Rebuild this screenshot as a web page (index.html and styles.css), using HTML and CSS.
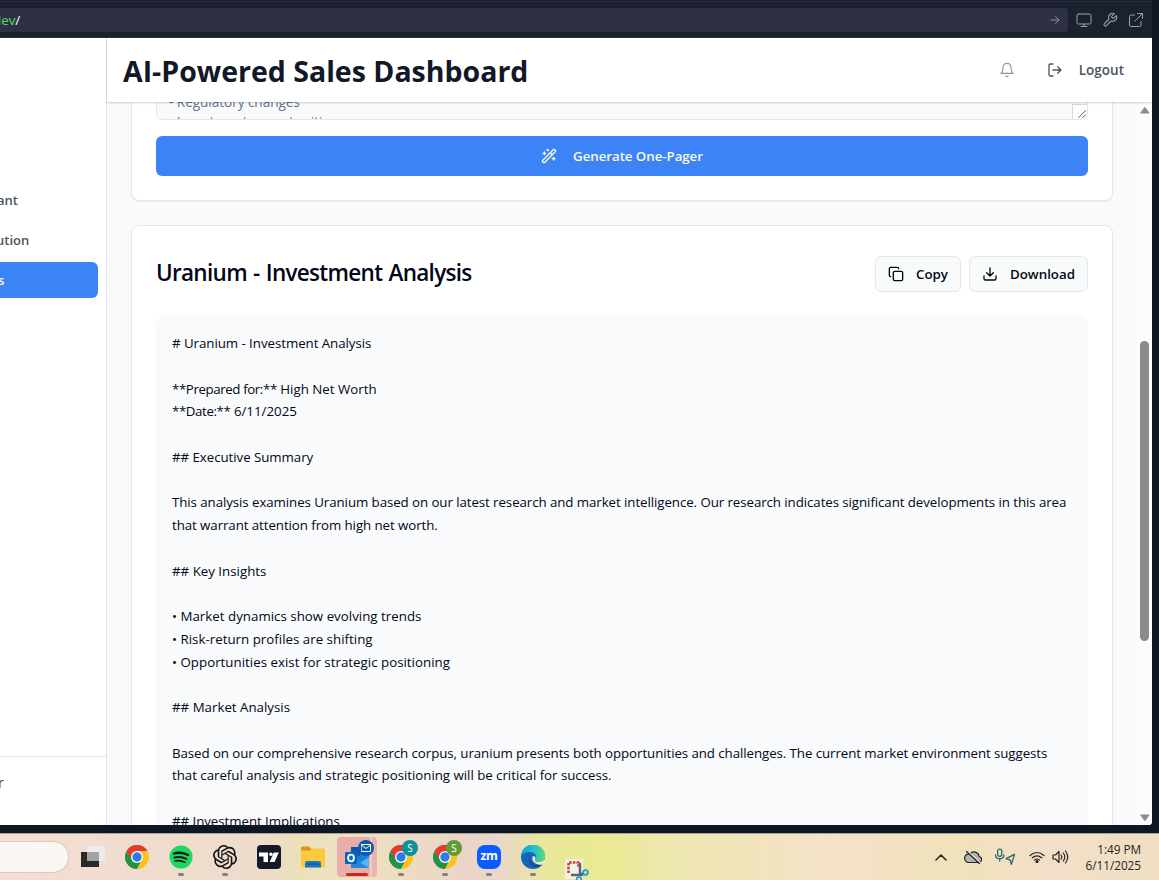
FILE: index.html
```html
<!DOCTYPE html>
<html lang="en">
<head>
<meta charset="utf-8">
<title>AI-Powered Sales Dashboard</title>
<link rel="stylesheet" href="styles.css">
</head>
<body>
<svg class="defs" width="0" height="0" aria-hidden="true">
  <defs>
    <symbol id="chrome" viewBox="0 0 24 24">
      <path d="M1.6 6A12 12 0 0 1 22.4 6L12 12z" fill="#e33b2e"/>
      <path d="M22.4 6A12 12 0 0 1 12 24L16.4 14.6 12 6z" fill="#fcc31e"/>
      <path d="M1.6 6A12 12 0 0 0 12 24L16.6 14.8 7.5 14.5z" fill="#229342"/>
      <path d="M12 6h10.4A12 12 0 0 0 1.6 6l5 8.600z" fill="#e33b2e"/>
      <circle cx="12" cy="12" r="6" fill="#fff"/>
      <circle cx="12" cy="12" r="4.700" fill="#2f7bea"/>
    </symbol>
  </defs>
</svg>

<header class="browser">
  <div class="address"><span><b>dev</b>/</span>
    <svg class="go" viewBox="0 0 10 10"><path d="M1 5h8M5.500 1.500 9 5 5.500 8.500"/></svg>
  </div>
  <nav class="tools">
    <svg viewBox="0 0 16 16"><rect x="1" y="2" width="14" height="10" rx="1.500"/><path d="M8 12v2.500M5 14.500h6"/></svg>
    <svg viewBox="0 0 24 24"><path d="M14.700 6.300a1 1 0 0 0 0 1.400l1.600 1.600a1 1 0 0 0 1.400 0l3.770-3.770a6 6 0 0 1-7.940 7.940l-6.910 6.910a2.120 2.120 0 0 1-3-3l6.910-6.910a6 6 0 0 1 7.940-7.940z" stroke-width="1.700"/></svg>
    <svg viewBox="0 0 16 16"><path d="M6.500 3H3a1.500 1.500 0 0 0-1.500 1.500V13A1.500 1.500 0 0 0 3 14.500h8.500A1.500 1.500 0 0 0 13 13V9.500M9.500 1.500h5v5M14.500 1.500 7 9"/></svg>
  </nav>
</header>

<div class="window">
  <aside class="sidebar">
    <nav class="menu">
      <a>ant</a>
      <a>ution</a>
      <a class="active">s</a>
    </nav>
    <div class="user">r</div>
  </aside>
  <section class="app">
    <header class="topbar">
      <h1>AI-Powered Sales Dashboard</h1>
      <svg class="bell" viewBox="0 0 24 24"><path d="M6 8a6 6 0 0 1 12 0c0 7 3 9 3 9H3s3-2 3-9M10.300 21a1.940 1.940 0 0 0 3.400 0"/></svg>
      <svg class="exit" viewBox="0 0 24 24"><path d="M9 21H5a2 2 0 0 1-2-2V5a2 2 0 0 1 2-2h4M16 17l5-5-5-5M21 12H9"/></svg>
      <span class="logout">Logout</span>
    </header>
    <div class="body">
      <main>
        <article class="card form">
          <div class="prompt">
            <p>- Regulatory changes<br>- Investment opportunities</p>
            <svg class="grip" viewBox="0 0 15 15"><path d="M6 13.500 13.500 6M10.500 13.500 13.500 10.500"/></svg>
          </div>
          <button class="generate">
            <svg viewBox="0 0 24 24"><path d="m21.640 3.640-1.280-1.280a1.210 1.210 0 0 0-1.720 0L2.360 18.640a1.210 1.210 0 0 0 0 1.720l1.280 1.280a1.200 1.200 0 0 0 1.720 0L21.640 5.360a1.200 1.200 0 0 0 0-1.720M14 7l3 3M5 6v4M19 14v4M10 2v2M7 8H3M21 16h-4M11 3H9"/></svg>
            <span>Generate One-Pager</span>
          </button>
        </article>
        <article class="card result">
          <div class="heading">
            <h2>Uranium - Investment Analysis</h2>
            <button class="copy"><svg viewBox="0 0 24 24"><rect x="8" y="8" width="14" height="14" rx="2"/><path d="M4 16c-1.100 0-2-.9-2-2V4c0-1.100.9-2 2-2h10c1.100 0 2 .9 2 2"/></svg><span>Copy</span></button>
            <button class="download"><svg viewBox="0 0 24 24"><path d="M21 15v4a2 2 0 0 1-2 2H5a2 2 0 0 1-2-2v-4M7 10l5 5 5-5M12 15V3"/></svg><span>Download</span></button>
          </div>
          <div class="report">
            <p class="sub"># Uranium - Investment Analysis</p>
            <p class="meta"><span>**Prepared for:**</span> High Net Worth<br><span>**Date:**</span> 6/11/2025</p>
            <p class="sub">## Executive Summary</p>
            <p class="long">This analysis examines Uranium based on our latest research and market intelligence. Our research indicates significant developments in this area<br>that warrant attention from high net worth.</p>
            <p>## Key Insights</p>
            <p class="list">• Market dynamics show evolving trends<br>• Risk-return profiles are shifting<br>• Opportunities exist for strategic positioning</p>
            <p>## Market Analysis</p>
            <p class="long">Based on our comprehensive research corpus, uranium presents both opportunities and challenges. The current market environment suggests<br><span class="last">that careful analysis and strategic positioning will be critical for success.</span></p>
            <p class="sub">## Investment Implications</p>
          </div>
        </article>
      </main>
      <div class="scrollbar">
        <svg viewBox="0 0 10 7"><path d="M5 .5 9 6H1z"/></svg>
        <i></i>
        <svg viewBox="0 0 10 7"><path d="M5 6.500 9 1H1z"/></svg>
      </div>
    </div>
  </section>
</div>

<footer class="taskbar">
  <div class="search"></div>
  <div class="apps">
    <div class="app-icon"><svg viewBox="0 0 24 24"><path d="M0 7h18v15H0z" fill="#292929"/><path d="M6 1h18v15H6z" fill="#ececec"/><path d="M6 7h12v9H6z" fill="#a2a2a1"/></svg></div>
    <div class="app-icon"><svg><use href="#chrome"/></svg></div>
    <div class="app-icon running"><svg viewBox="0 0 24 24"><circle cx="12" cy="12" r="11.500" fill="#1ed760"/><g fill="none" stroke="#101c14" stroke-linecap="round"><path d="M5 8.500q7-2 14 1.500" stroke-width="2.300"/><path d="M5.500 12.500q6-1.600 12 1.300" stroke-width="1.900"/><path d="M6 16q5-1.200 10 1.200" stroke-width="1.600"/></g></svg></div>
    <div class="app-icon running"><svg viewBox="0 0 24 24"><path fill="#111" d="M22.282 9.821a5.985 5.985 0 0 0-.516-4.910 6.046 6.046 0 0 0-6.510-2.900A6.065 6.065 0 0 0 4.981 4.182a5.985 5.985 0 0 0-3.998 2.900 6.046 6.046 0 0 0 .743 7.097 5.980 5.980 0 0 0 .511 4.911 6.051 6.051 0 0 0 6.515 2.900A5.985 5.985 0 0 0 13.260 24a6.056 6.056 0 0 0 5.772-4.206 5.990 5.990 0 0 0 3.998-2.900 6.056 6.056 0 0 0-.748-7.073zM13.260 22.430a4.476 4.476 0 0 1-2.876-1.041l.141-.081 4.779-2.758a.795.795 0 0 0 .393-.681v-6.737l2.020 1.169a.071.071 0 0 1 .038.052v5.583a4.504 4.504 0 0 1-4.495 4.494zM3.600 18.304a4.471 4.471 0 0 1-.535-3.014l.142.085 4.783 2.759a.771.771 0 0 0 .780 0l5.843-3.369v2.332a.080.080 0 0 1-.033.062L9.740 19.950a4.499 4.499 0 0 1-6.140-1.646zM2.340 7.896a4.485 4.485 0 0 1 2.366-1.973V11.600a.766.766 0 0 0 .388.677l5.815 3.354-2.020 1.169a.076.076 0 0 1-.071 0l-4.830-2.787A4.504 4.504 0 0 1 2.340 7.872zm16.597 3.855-5.833-3.387L15.119 7.200a.076.076 0 0 1 .071 0l4.830 2.791a4.494 4.494 0 0 1-.676 8.105v-5.678a.790.790 0 0 0-.407-.667zm2.010-3.023-.141-.085-4.774-2.782a.776.776 0 0 0-.785 0L9.409 9.230V6.897a.066.066 0 0 1 .028-.061l4.830-2.787a4.499 4.499 0 0 1 6.680 4.660zM8.306 12.863l-2.020-1.164a.080.080 0 0 1-.038-.057V6.075a4.499 4.499 0 0 1 7.376-3.454l-.142.081L8.704 5.460a.795.795 0 0 0-.393.681zm1.097-2.365 2.602-1.500 2.607 1.500v2.999l-2.597 1.500-2.607-1.500z"/></svg></div>
    <div class="app-icon"><svg viewBox="0 0 24 24"><rect width="24" height="24" rx="4" fill="#151b26"/><path d="M2 7.500h9V17H6.500v-5.500H2zM16.800 7.500h5L17.500 17h-4.800z" fill="#fff"/><circle cx="13.900" cy="9.200" r="1.800" fill="#fff"/></svg></div>
    <div class="app-icon"><svg viewBox="0 0 24 24"><path d="M0 3q0-1.500 1.500-1.500H8L10.500 4H23v7H0z" fill="#d99a13"/><path d="M0 5.500h9L11 3.500h11.500Q24 3.500 24 5v16.500q0 1-1 1H1q-1 0-1-1z" fill="#fdc93c"/><path d="M4 22.500V18q0-2 2-2h12q2 0 2 2v4.500z" fill="#1879c8"/><path d="M7 19h10" stroke="#0c559c" stroke-width="1.500"/></svg></div>
    <div class="app-icon outlook"><svg viewBox="0 0 24 24"><path d="M6 2h18v21H6z" fill="#1681d6"/><path d="M6 2h9v9H6z" fill="#0a58ad"/><path d="M6 13l9 5 9-6v11H6z" fill="#53b6f0"/><path d="M6 12l18 11H6z" fill="#2287d9"/><rect y="7" width="12" height="12" rx="1" fill="#0865bd"/><ellipse cx="6" cy="13" rx="2.900" ry="3.300" fill="none" stroke="#fff" stroke-width="1.800"/></svg><em class="mail"><svg viewBox="0 0 10 8"><path d="M.5.500h9v7h-9zM.5 1 5 4.500 9.500 1"/></svg></em></div>
    <div class="app-icon running"><svg><use href="#chrome"/></svg><em class="teal">S</em></div>
    <div class="app-icon running"><svg><use href="#chrome"/></svg><em class="green">S</em></div>
    <div class="app-icon running"><div class="zoom-logo">zm</div></div>
    <div class="app-icon running"><svg viewBox="0 0 24 24"><defs><linearGradient id="edge"><stop offset="0" stop-color="#169ce0"/><stop offset=".55" stop-color="#27bfcf"/><stop offset="1" stop-color="#5ede68"/></linearGradient></defs><circle cx="12" cy="12" r="12" fill="#1267bb"/><path d="M0 11A12 12 0 0 1 24 12q0 5-6 5c-4 0-5-2-3.500-3.500C17 10 12 7 8 7 4 7 1 9 0 11z" fill="url(#edge)"/><path d="M10 10c-3 5 1 11 8 10q2-.5 3.500-1.500-1 2-3 3.500C10 24 5 16 10 10z" fill="#194b94"/><path d="M14.500 13.500C13 15 14 17 18 17q4 0 6.500-3v3.500l-2.500 2C16 21 9 16 12 11q3 0 2.500 2.500z" fill="#edeac2"/></svg></div>
    <div class="app-icon snip"><svg viewBox="0 0 24 24"><rect width="18" height="20" rx="2" fill="#f3f1ee"/><path d="M3.500 14V3.500H13.500V9" fill="none" stroke="#d9401e" stroke-width="2.600" stroke-linecap="butt" stroke-dasharray="2.600 1.100"/><path d="M15 5v11M7 16h10" stroke="#5c636b" stroke-width="2.500"/><path d="M15 16l3-2" stroke="#5c636b" stroke-width="2"/><g fill="none" stroke="#209bd8" stroke-width="1.800"><circle cx="20.500" cy="13.500" r="2.300"/><circle cx="14" cy="20.500" r="2.300"/></g></svg></div>
  </div>
  <div class="tray">
    <svg class="chevron" viewBox="0 0 12 8"><path d="M1 7 6 2l5 5"/></svg>
    <svg class="cloud" viewBox="0 0 18 14"><path d="M4 12.500h10a3 3 0 0 0 1-6A5 5 0 0 0 6 4 4 4 0 0 0 4 12.500z" fill="#b3b3b8"/><path d="M3.500 1l13 12" stroke="#f2e4c4" stroke-width="1.500"/><path d="M2.500 1.500l13 12"/></svg>
    <svg class="mic" viewBox="0 0 20 17"><rect x="3" y="1" width="4" height="7" rx="2"/><path d="M1 6.500q0 3.500 4 3.500t4-3.500M5 10v2.500M19 6l-8 4 4 1.500 1 4z"/></svg>
    <svg class="wifi" viewBox="0 0 16 12"><path d="M1 4.500Q8-1.500 15 4.500M3.300 6.800q4.700-4 9.400 0M5.500 9q2.500-2 5 0"/><circle cx="8" cy="10.500" r="1"/></svg>
    <svg class="sound" viewBox="0 0 17 14"><path d="M1 5h2.500L7 1.500v11L3.500 9H1zM9 5q1.500 2 0 4M11.300 3q3 4 0 8M13.500 1q4.500 6 0 12"/></svg>
    <time>1:49 PM<br>6/11/2025</time>
  </div>
</footer>
</body>
</html>
```

FILE: styles.css
```css
* { box-sizing: border-box; }
body {
  margin: 0; width: 1159px; height: 880px; overflow: hidden;
  display: flex; flex-direction: column;
  background: #0f1724; color: #020817;
  font: 14px/20px "Open Sans", "Noto Sans", sans-serif;
}
h1, h2, p { margin: 0; }
svg { fill: none; stroke: currentColor; stroke-linecap: round; stroke-linejoin: round; flex: none; display: block; }
.defs { display: none; }
.defs symbol, .app-icon svg { stroke: none; }
button { font: inherit; display: flex; align-items: center; margin: 0; border-radius: 6px; }

.browser {
  flex: 0 0 38px; width: 1152px; padding: 6px 0 5px;
  display: flex; align-items: flex-start;
  background: #1c2130; border-bottom: 1px solid #2c3141;
  background-image: linear-gradient(#2a2f3f, #2a2f3f); background-size: 100% 1px; background-position: 0 1px; background-repeat: no-repeat;
}
.address {
  width: 1068px; height: 24px; margin-top: 2px; padding-right: 8px;
  display: flex; align-items: center; justify-content: space-between;
  background: #2d3143; border-radius: 0 4px 4px 0; color: #fff;
}
.address span { margin-left: -7px; font-size: 13.500px; letter-spacing: -.1px; }
.address b { color: #5fd36e; font-weight: 400; }
.go { width: 10px; height: 10px; color: #8b8f9b; }
.tools { display: flex; gap: 10px; margin: 6px 0 0 8px; color: #9ca0a8; }
.tools svg { width: 16px; height: 16px; }

.window { flex: 0 0 787px; width: 1152px; display: flex; overflow: hidden; background: #fff; border-bottom-right-radius: 4px; }
.sidebar { width: 107px; flex: none; border-right: 1px solid #e2e4e9; padding-top: 144px; display: flex; flex-direction: column; justify-content: space-between; }
.menu { display: flex; flex-direction: column; gap: 4px; }
.menu a { height: 36px; width: 98px; line-height: 36px; color: #4b5563; font-weight: 600; font-size: 13px; }
.menu a:nth-child(1) { text-indent: -3px; }
.menu a:nth-child(2) { text-indent: -4px; }
.menu .active { background: #3c83f6; color: #fff; border-radius: 0 6px 6px 0; text-indent: -2px; }
.user { height: 69px; border-top: 1px solid #e2e4e9; padding-top: 16px; color: #334155; text-indent: -2px; }

.app { flex: 1; display: flex; flex-direction: column; min-width: 0; }
.topbar {
  flex: 0 0 64px; padding: 0 28px 0 16px; display: flex; align-items: center; position: relative;
  background: #fff; box-shadow: 0 1px 2px rgba(0,0,0,.18); color: #4b5563;
}
h1 { flex: 1; font-size: 28.500px; line-height: 36px; font-weight: 700; color: #111827; padding-top: 1px; white-space: nowrap; }
.bell { width: 16px; height: 16px; margin-right: 32px; stroke-width: 1.700; color: #8d95a2; }
.exit { width: 16px; height: 16px; margin-right: 16px; stroke-width: 2; }
.logout { font-weight: 600; font-size: 13.500px; }

.body { flex: 1; min-height: 0; display: flex; background: #f8fafc; }
main { flex: 1; padding: 0 24px; overflow: hidden; }
.card { width: 982px; background: #fff; border: 1px solid #e2e8f0; border-radius: 8px; padding: 0 24px; box-shadow: 0 1px 2px rgba(0,0,0,.05); }
.form { height: 99px; border-top: 0; border-radius: 0 0 8px 8px; margin-bottom: 24px; }
.prompt {
  height: 18px; margin-bottom: 16px; padding-left: 12px; overflow: hidden;
  display: flex; justify-content: space-between; align-items: flex-end;
  border: 1px solid #e2e8f0; border-top: 0; border-radius: 0 0 6px 6px; background: #f9fafb; color: #64748b;
}
.prompt p { height: 27px; font-size: 13.600px; letter-spacing: -.05px; }
.grip { width: 15px; height: 15px; border: 1px solid #d5d8dc; border-right: 0; border-bottom: 0; background: #fff; color: #333; stroke-width: .9; }
.generate { width: 932px; height: 40px; padding: 0; border: 0; justify-content: center; gap: 16px; background: #3c83f6; color: #f8fafc; font-weight: 600; font-size: 13.300px; letter-spacing: -.05px; }
.generate svg { width: 16px; height: 16px; stroke-width: 2; }
.result { height: 800px; padding-top: 30px; }
.heading { height: 36px; display: flex; align-items: center; gap: 8px; margin-bottom: 24px; }
h2 { flex: 1; font-size: 22.500px; line-height: 32px; margin-top: -2px; font-weight: 600; letter-spacing: -.7px; word-spacing: 1px; white-space: nowrap; }
.heading button { height: 36px; padding: 0 12px; gap: 12px; background: #f9fbfb; border: 1px solid #e2e8f0; color: #020817; font-weight: 600; font-size: 13.300px; white-space: nowrap; }
.heading svg { width: 16px; height: 16px; stroke-width: 2; }
.copy { width: 86px; }
.download { width: 119px; }
.report { height: 640px; padding: 16px; border-radius: 8px; background: #f8fafc; font-size: 13.300px; line-height: 22.750px; white-space: nowrap; }
.report p { margin-bottom: 22.750px; }
.report .long { letter-spacing: -.075px; }
.report .last { letter-spacing: -.03px; }
.report .meta span { letter-spacing: -.4px; }
.report .sub { letter-spacing: -.05px; }
.report .list { letter-spacing: .015px; }
.scrollbar { width: 15px; padding: 5px 3px 4px; display: flex; flex-direction: column; align-items: center; background: #fbfcfc; color: #8b8b8b; }
.scrollbar svg { width: 10px; height: 7px; fill: currentColor; }
.scrollbar i { width: 9px; height: 300px; margin: 227px 0 auto; border-radius: 5px; background: #8b8b8b; }

.taskbar {
  height: 47px; margin-top: auto; display: flex; border-top: 1px solid #a7a197;
  background: linear-gradient(90deg, #f4ddd2 0, #eddccb 22%, #ebe0b9 26%, #eee3c0 29%, #ecd5c8 40%, #ead7cb 43%, #e8e79c 47%, #e9ea91 52%, #eee7b0 58%, #f4e2c9 72%, #f0e2ba 83%, #f2dfc8 90%, #f0dfc3 100%);
}
.search { width: 69px; height: 32px; margin: 7px 1px 0 0; background: #fbf6f3; border: 1px solid #d9cbc2; border-left: 0; border-radius: 0 16px 16px 0; }
.apps { display: flex; }
.app-icon { width: 44px; height: 46px; padding: 11px 0 0 11px; position: relative; }
.app-icon > svg { width: 24px; height: 24px; }
.running::after { content: ""; position: absolute; left: 20px; top: 39px; width: 6px; height: 3px; border-radius: 2px; background: #858078; }
.outlook::before { content: ""; position: absolute; left: 3px; top: 3px; width: 40px; height: 40px; border-radius: 4px; background: linear-gradient(90deg, #e9aeac 33px, #f2cdc6 33px 35px, #eab4ad 35px); }
.outlook > svg { position: relative; }
.outlook::after { content: ""; position: absolute; left: 12px; top: 39px; width: 22px; height: 3px; border-radius: 2px; background: #c42b1c; }
.app-icon em { position: absolute; left: 24px; top: 6px; width: 16px; height: 16px; border-radius: 50%; font: 10px/16px "Open Sans", sans-serif; text-align: center; color: #fff; }
.mail { background: #075db3; padding: 4px 3px; }
.mail svg { width: 10px; height: 8px; stroke: #fff; }
.teal { background: #0c919b; }
.green { background: #629b38; }
.zoom-logo { width: 24px; height: 24px; border-radius: 8px; background: #0b5cff; color: #fff; font: 700 12px/22px "Open Sans", sans-serif; text-align: center; letter-spacing: -.4px; }
.snip { padding-top: 25px; }
.tray { flex: 1; display: flex; color: #252423; stroke-width: 1.200; justify-content: flex-end; padding: 0 18px 0 0; }
.chevron { width: 12px; height: 8px; margin: 19px 17px 0 0; stroke-width: 1.500; }
.cloud { width: 18px; height: 14px; margin: 16px 12px 0 0; }
.mic { width: 22px; height: 18px; margin: 14px 13px 0 0; color: #286472; }
.wifi { width: 16px; height: 12px; margin: 17px 7px 0 0; }
.wifi circle { fill: currentColor; }
.sound { width: 17px; height: 14px; margin: 16px 15px 0 0; }
time { display: block; padding-top: 7px; width: 57px; font-size: 11.800px; line-height: 16px; text-align: right; letter-spacing: -.05px; white-space: nowrap; }
```
